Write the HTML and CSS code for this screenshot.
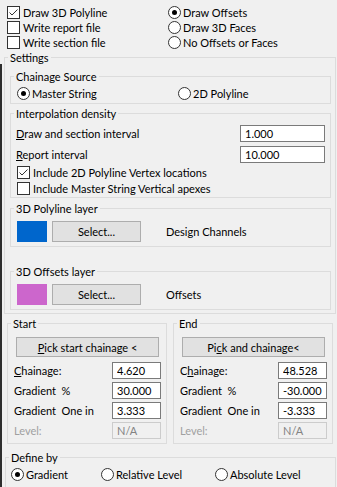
FILE: index.html
```html
<!DOCTYPE html>
<html>
<head>
<meta charset="utf-8">
<title>Draw Settings</title>
<link rel="stylesheet" href="styles.css">
</head>
<body>
<div class="options">
    <label class="choice"><span class="box"><svg viewBox="0 0 11 11"><polyline points="1.5,5.5 4,8 9.5,2.5"/></svg></span>Draw 3D Polyline</label>
    <label class="choice radio"><span class="dot on"></span>Draw Offsets</label>
    <label class="choice"><span class="box"></span>Write report file</label>
    <label class="choice radio"><span class="dot"></span>Draw 3D Faces</label>
    <label class="choice"><span class="box"></span>Write section file</label>
    <label class="choice radio"><span class="dot"></span>No Offsets or Faces</label>
</div>

<fieldset class="group settings">
    <legend>Settings</legend>
    <div class="inner">
        <fieldset class="group source">
            <legend>Chainage Source</legend>
            <div class="inner pair">
                <label class="choice radio"><span class="dot on"></span>Master String</label>
                <label class="choice radio"><span class="dot"></span>2D Polyline</label>
            </div>
        </fieldset>

        <fieldset class="group density">
            <legend>Interpolation density</legend>
            <div class="inner">
                <div class="field"><span><u>D</u>raw and section interval</span><input class="wide" value="1.000"></div>
                <div class="field"><span><u>R</u>eport interval</span><input class="wide" value="10.000"></div>
                <label class="choice first"><span class="box"><svg viewBox="0 0 11 11"><polyline points="1.5,5.5 4,8 9.5,2.5"/></svg></span>Include 2D Polyline Vertex locations</label>
                <label class="choice"><span class="box"></span>Include Master String Vertical apexes</label>
            </div>
        </fieldset>

        <fieldset class="group layer">
            <legend>3D Polyline layer</legend>
            <div class="inner swatch-row">
                <span class="swatch" style="background: #0066cc"></span>
                <button class="btn select">Select...</button>
                <span class="layer-name">Design Channels</span>
            </div>
        </fieldset>

        <fieldset class="group layer offsets">
            <legend>3D Offsets layer</legend>
            <div class="inner swatch-row">
                <span class="swatch" style="background: #cc66cc"></span>
                <button class="btn select">Select...</button>
                <span class="layer-name">Offsets</span>
            </div>
        </fieldset>
    </div>
</fieldset>

<div class="ends">
    <fieldset class="group end">
        <legend>Start</legend>
        <div class="inner">
            <button class="btn pick"><u>P</u>ick start chainage &lt;</button>
            <div class="values">
                <div class="field"><span><u>C</u>hainage:</span><input class="num" value="4.620"></div>
                <div class="field"><span>Gradient&nbsp; %</span><input class="num" value="30.000"></div>
                <div class="field"><span>Gradient&nbsp; One in</span><input class="num" value="3.333"></div>
                <div class="field muted"><span>Level:</span><input class="num" value="N/A" disabled></div>
            </div>
        </div>
    </fieldset>
    <fieldset class="group end">
        <legend>End</legend>
        <div class="inner">
            <button class="btn pick">Pi<u>c</u>k and chainage&lt;</button>
            <div class="values">
                <div class="field"><span>C<u>h</u>ainage:</span><input class="num" value="48.528"></div>
                <div class="field"><span>Gradient&nbsp; %</span><input class="num" value="-30.000"></div>
                <div class="field"><span>Gradient&nbsp; One in</span><input class="num" value="-3.333"></div>
                <div class="field muted"><span>Level:</span><input class="num" value="N/A" disabled></div>
            </div>
        </div>
    </fieldset>
</div>

<fieldset class="group define">
    <legend>Define by</legend>
    <div class="inner triple">
        <label class="choice radio"><span class="dot on"></span>Gradient</label>
        <label class="choice radio"><span class="dot"></span>Relative Level</label>
        <label class="choice radio"><span class="dot"></span>Absolute Level</label>
    </div>
</fieldset>
</body>
</html>
```

FILE: styles.css
```css
html
{
    background: #f0f0f0;
}

body
{
    margin: 0;
    min-height: 487px;
    background: linear-gradient(#2e2e2e, #2e2e2e) 0 64px / 2px 100% no-repeat;

    font-family: Lato, "Noto Sans", sans-serif;
    font-size: 11px;
    line-height: 15px;
    color: #000000;
}

/* check boxes and radio buttons */

.choice
{
    display: flex;
    align-items: center;
    gap: 3px;
    height: 15px;
    white-space: nowrap;
}

.radio
{
    gap: 2px;
}

.box, .dot
{
    display: flex;
    align-items: center;
    justify-content: center;
    flex: none;
    width: 13px;
    height: 13px;
    box-sizing: border-box;
    border: 1px solid #333333;
    background: #ffffff;
}

.box svg
{
    width: 11px;
    height: 11px;
    fill: none;
    stroke: #333333;
    stroke-width: 1;
}

.dot
{
    border-radius: 50%;
}

.dot.on::after
{
    content: "";
    width: 5px;
    height: 5px;
    border-radius: 50%;
    background: #000000;
}

.options
{
    display: grid;
    grid-template-columns: 161px 1fr;
    padding: 5px 0 0 7px;
}

/* group boxes */

fieldset.group
{
    margin: 0;
    padding: 0;
    min-width: 0;
    border: 1px solid #dcdcdc;
}

fieldset.group > legend
{
    margin-left: 3px;
    padding: 0 2px;
    line-height: 15px;
}

.settings
{
    margin: 0 1px 0 4px !important;
}

.settings > .inner
{
    padding: 4px 4px 3px 5px;
}

.source > .inner
{
    padding: 1px 0 2px 6px;
}

.pair
{
    display: grid;
    grid-template-columns: 161px 1fr;
}

.pair .choice
{
    height: 16px;
}

.density
{
    margin-top: 2px !important;
}

.density > .inner
{
    padding: 4px 5px 1px 5px;
}

.field
{
    display: flex;
    align-items: center;
    justify-content: space-between;
    height: 17px;
    white-space: nowrap;
}

.density .field + .field
{
    margin-top: 4px;
}

.density .choice
{
    height: 16px;
    margin-left: 1px;
}

.density .choice.first
{
    margin-top: 1px;
}

.layer
{
    margin-top: 3px !important;
}

.layer.offsets
{
    margin-top: 17px !important;
}

.swatch-row
{
    display: flex;
    align-items: center;
    padding: 5px 0 4px 6px;
}

.swatch
{
    width: 30px;
    height: 21px;
}

.layer-name
{
    margin-left: 25px;
}

/* buttons and edit boxes */

.btn
{
    margin: 0;
    padding: 0;
    border: 1px solid #adadad;
    background: #e1e1e1;

    font: inherit;
    color: #000000;
}

.select
{
    width: 89px;
    height: 21px;
    margin-left: 5px;
}

input
{
    height: 17px;
    margin: 0;
    padding: 0 0 0 4px;
    box-sizing: border-box;
    border: 1px solid #7a7a7a;
    background: #ffffff;
    outline: none;

    font: inherit;
    color: #000000;
}

input.wide
{
    width: 85px;
}

input.num
{
    width: 49px;
}

input:disabled
{
    border-color: #cccccc;
    background: #f0f0f0;
    color: #838383;
}

.muted
{
    color: #a0a0a0;
}

/* start and end */

.ends
{
    display: flex;
    gap: 6px;
    margin: 2px 0 0 7px;
}

.end
{
    width: 160px;
    box-sizing: border-box;
}

.end > .inner
{
    padding: 6px 5px 4px 6px;
}

.pick
{
    display: block;
    width: calc(100% - 4px);
    height: 20px;
    margin: 0 2px;
}

.values
{
    display: grid;
    grid-template-rows: repeat(4, 17px);
    row-gap: 3px;
    margin-top: 5px;
}

/* define by */

.define
{
    margin: 6px 1px 0 5px !important;
}

.triple
{
    display: grid;
    grid-template-columns: 90px 114px 1fr;
    padding: 1px 0 10px 5px;
}

.triple .choice
{
    height: 16px;
}
```
